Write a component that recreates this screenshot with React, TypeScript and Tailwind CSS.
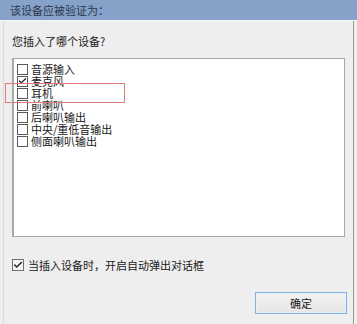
import { Check } from "lucide-react";

const devices = [
  { label: "音源输入", checked: false },
  { label: "麦克风", checked: true },
  { label: "耳机", checked: false },
  { label: "前喇叭", checked: false },
  { label: "后喇叭输出", checked: false },
  { label: "中央/重低音输出", checked: false },
  { label: "侧面喇叭输出", checked: false },
];

const font = "font-['Noto_Sans_CJK_SC','Microsoft_YaHei',sans-serif]";

function Box({ checked }: { checked: boolean }) {
  return (
    <span className="flex h-[11px] w-[11px] shrink-0 items-center justify-center border border-[#5a5a5a] bg-white">
      {checked && <Check className="h-[10px] w-[10px] text-[#222]" strokeWidth={3.5} />}
    </span>
  );
}

export default function App() {
  return (
    <div className={`relative flex h-[324px] w-[357px] flex-col overflow-hidden bg-[#efeeee] text-[11px] leading-[12px] text-[#1a1a1a] ${font}`}>
      <div className="flex h-[21px] shrink-0 items-center border-b border-[#f6f6f8] bg-[#86a2c8] pl-[10px] text-[11px] text-[#2a3850]">
        该设备应被验证为：
      </div>
      <div className="ml-[3px] mr-[3px] flex flex-1 flex-col border-l border-r border-l-[#d8d8d8] border-r-[#9a9a9a]">
        <p className="ml-[8px] mt-[14px]">您插入了哪个设备?</p>
        <div className="ml-[8px] mr-[8px] mt-[11px] h-[179px] border border-l-2 border-[#a8a8a8] bg-white pl-[3px] pt-[4px]">
          {devices.map((d) => (
            <div key={d.label} className="flex h-[12px] items-center gap-[3px]">
              <Box checked={d.checked} />
              <span className="text-[11px] leading-[12px]">{d.label}</span>
            </div>
          ))}
        </div>
        <div className="ml-[8px] mt-[22px] flex items-center gap-[4px]">
          <span className="flex h-[12px] w-[12px] items-center justify-center border border-[#707070] bg-[#f4f4f4]">
            <Check className="h-[10px] w-[10px] text-[#222]" strokeWidth={3.5} />
          </span>
          <span>当插入设备时，开启自动弹出对话框</span>
        </div>
        <div className="mr-[6px] mt-[21px] flex justify-end">
          <button className="flex h-[22px] w-[92px] items-center justify-center border border-[#7fb2e6] bg-gradient-to-b from-[#f2f2f2] to-[#e6e6e6] text-[11px] text-[#1a1a1a] shadow-[inset_0_0_0_1px_#e8f1fb]">
            确定
          </button>
        </div>
      </div>
      <div className="absolute left-[5px] top-[83px] h-[20px] w-[120px] border border-[#e07c7c]" />
    </div>
  );
}
